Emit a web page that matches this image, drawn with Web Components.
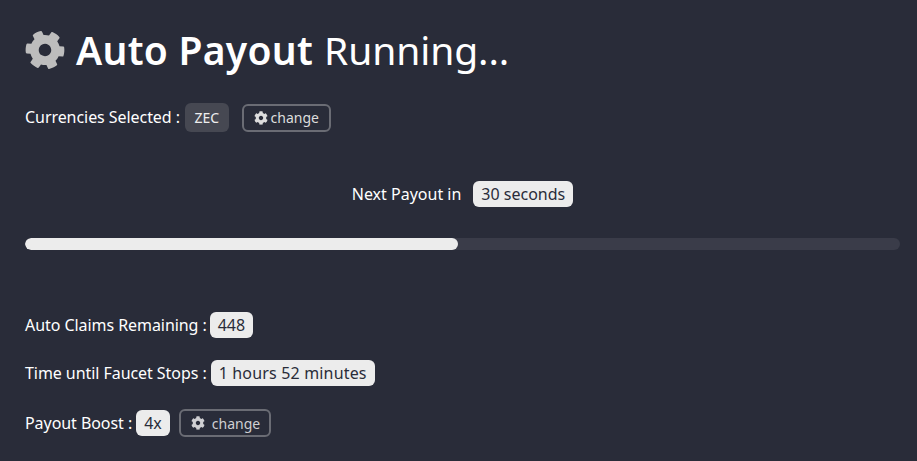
<!DOCTYPE html>
<html>
<head>
<meta charset="utf-8">
<title>Auto Payout</title>
<style>
  html, body { margin: 0; background: #292c39; }
  body { font-family: "Noto Sans", sans-serif; color: #fff; }
  info-row span { letter-spacing: -0.06px; }
</style>
</head>
<body>
<payout-panel>
  <payout-title slot="title"></payout-title>
  <info-row slot="currencies"><span style="margin-bottom:1px">Currencies Selected :</span><info-badge dark style="margin-left:1px">ZEC</info-badge><change-button gap="3px" style="margin-left:9px">change</change-button></info-row>
  <next-payout slot="next">30 seconds</next-payout>
  <progress-bar slot="bar" value="49.5"></progress-bar>
  <info-row slot="claims"><span>Auto Claims Remaining :</span><info-badge style="margin-left:-1px">448</info-badge></info-row>
  <info-row slot="time"><span>Time until Faucet Stops :</span><info-badge style="letter-spacing:.17px">1 hours 52 minutes</info-badge></info-row>
  <info-row slot="boost"><span>Payout Boost :</span><info-badge>4x</info-badge><change-button gap="7px" dim style="margin-left:5px;padding-right:9px">change</change-button></info-row>
</payout-panel>

<script>
const COG = `<svg viewBox="0 0 512 512" aria-hidden="true"><path fill="currentColor" d="M487.4 315.7l-42.6-24.6c4.3-23.2 4.3-47 0-70.2l42.6-24.6c4.9-2.8 7.1-8.6 5.5-14-11.1-35.6-30-67.8-54.7-94.6-3.8-4.1-10-5.1-14.8-2.3L380.8 110c-17.9-15.4-38.5-27.3-60.8-35.1V25.8c0-5.6-3.9-10.5-9.4-11.7-36.7-8.2-74.3-7.8-109.2 0-5.5 1.2-9.4 6.1-9.4 11.7V75c-22.2 7.9-42.8 19.8-60.8 35.1L88.7 85.5c-4.9-2.8-11-1.9-14.8 2.3-24.7 26.7-43.6 58.9-54.7 94.6-1.7 5.4.6 11.2 5.5 14L67.3 221c-4.3 23.2-4.3 47 0 70.2l-42.6 24.6c-4.9 2.8-7.1 8.6-5.5 14 11.1 35.6 30 67.8 54.7 94.6 3.8 4.1 10 5.1 14.8 2.3l42.6-24.6c17.9 15.4 38.5 27.3 60.8 35.1v49.2c0 5.6 3.9 10.5 9.4 11.7 36.7 8.2 74.3 7.8 109.2 0 5.5-1.2 9.4-6.1 9.4-11.7v-49.2c22.2-7.9 42.8-19.8 60.8-35.1l42.6 24.6c4.9 2.8 11 1.9 14.8-2.3 24.7-26.7 43.6-58.9 54.7-94.6 1.5-5.5-.7-11.3-5.6-14.1zM256 336c-44.1 0-80-35.9-80-80s35.9-80 80-80 80 35.9 80 80-35.9 80-80 80z"/></svg>`;

// Basic element: shadow root filled from a css + html string
class Base extends HTMLElement {
  constructor() {
    super();
    this.attachShadow({ mode: 'open' });
  }
  connectedCallback() {
    this.shadowRoot.innerHTML = `<style>${this.css()}</style>${this.html()}`;
  }
}

class PayoutPanel extends Base {
  css() {
    return `
      :host { display: block; width: 875px; padding: 25px 17px 0 25px; }
      .title { height: 50px; margin-bottom: 28px; }
      .currencies { height: 29px; }
      .next { margin-top: 49px; height: 26px; }
      .bar { margin-top: 31px; }
      .claims { margin-top: 62px; }
      .time { margin-top: 22px; }
      .boost { margin-top: 23px; }
    `;
  }
  html() {
    return `
      <div class="title"><slot name="title"></slot></div>
      <div class="currencies"><slot name="currencies"></slot></div>
      <div class="next"><slot name="next"></slot></div>
      <div class="bar"><slot name="bar"></slot></div>
      <div class="claims"><slot name="claims"></slot></div>
      <div class="time"><slot name="time"></slot></div>
      <div class="boost"><slot name="boost"></slot></div>
    `;
  }
}

class PayoutTitle extends Base {
  css() {
    return `
      :host { display: flex; align-items: center; height: 50px; font-size: 39px; line-height: 50px; }
      svg { width: 40px; height: 40px; color: #bdbdbd; margin-right: 11px; flex: none; transform: rotate(35deg); }
      b { font-weight: 600; letter-spacing: .27px; margin-right: 11px; }
      span { letter-spacing: -.1px; }
    `;
  }
  html() {
    return `${COG}<b>Auto Payout</b><span>Running...</span>`;
  }
}

class InfoRow extends Base {
  css() {
    return `
      :host { display: flex; align-items: center; gap: 4px; font-size: 16px; height: 100%; min-height: 26px; white-space: nowrap; }
    `;
  }
  html() {
    return `<slot></slot>`;
  }
}

class InfoBadge extends Base {
  css() {
    return `
      :host { display: inline-block; height: 26px; line-height: 26px; padding: 0 8px; border-radius: 6px;
        background: #ececec; color: #292c39; font-size: 16px; }
      :host([dark]) { height: 29px; line-height: 29px; padding: 0 9.5px; background: #464852; color: #eeeeee; font-size: 14px; }
    `;
  }
  html() {
    return `<slot></slot>`;
  }
}

class ChangeButton extends Base {
  css() {
    return `
      :host { display: inline-flex; align-items: center; box-sizing: border-box; height: 28px; padding: 0 10px;
        border: 2px solid #6a6c74; border-radius: 6px; color: #dddddd; font-size: 14px; }
      :host([dim]) { color: #cfcfd2; }
      svg { width: 14px; height: 14px; flex: none; margin-right: ${this.getAttribute('gap') || '3px'}; }
    `;
  }
  html() {
    return `${COG}<slot></slot>`;
  }
}

class NextPayout extends Base {
  css() {
    return `
      :host { display: flex; justify-content: center; align-items: center; gap: 12px; height: 26px; font-size: 16px; }
      .val { height: 26px; line-height: 26px; padding: 0 8px; border-radius: 6px; background: #ececec; color: #292c39; }
    `;
  }
  html() {
    return `<span>Next Payout in</span><span class="val"><slot></slot></span>`;
  }
}

class ProgressBar extends Base {
  css() {
    return `
      :host { display: block; height: 12px; border-radius: 6px; background: #3a3c49; overflow: hidden; }
      .fill { height: 100%; border-radius: 6px; background: #ececec; }
    `;
  }
  html() {
    return `<div class="fill" style="width:${this.getAttribute('value')}%"></div>`;
  }
}

customElements.define('payout-panel', PayoutPanel);
customElements.define('payout-title', PayoutTitle);
customElements.define('info-row', InfoRow);
customElements.define('info-badge', InfoBadge);
customElements.define('change-button', ChangeButton);
customElements.define('next-payout', NextPayout);
customElements.define('progress-bar', ProgressBar);
</script>
</body>
</html>
